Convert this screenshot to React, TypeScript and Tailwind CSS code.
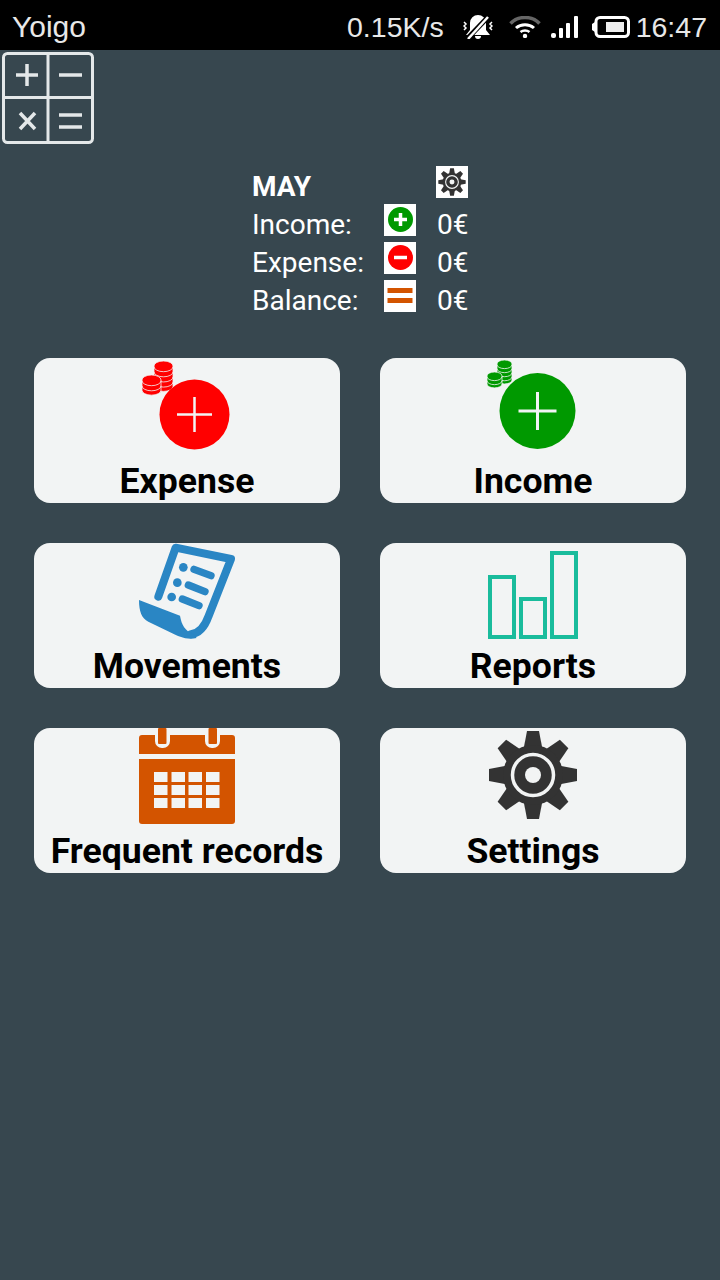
import React from 'react';

const Gear = ({ className }: { className: string }) => (
    <svg viewBox="0 0 90 90" className={className}>
        {[0, 45, 90, 135, 180, 225, 270, 315].map((a) => (
            <polygon key={a} points="39,1 51,1 55,22 35,22" fill="#333333" transform={`rotate(${a} 45 45)`} />
        ))}
        <circle cx="45" cy="45" r="30" fill="#333333" />
        <circle cx="45" cy="45" r="20.500" fill="none" stroke="#f2f4f4" strokeWidth="3.500" />
        <circle cx="45" cy="45" r="8" fill="#f2f4f4" />
    </svg>
);

const Coins = ({ x, y, w, n, color }: { x: number; y: number; w: number; n: number; color: string }) => {
    const ry = w * 0.26;
    const step = w * 0.27;
    const h = step * n;
    const bands = Array.from({ length: n }, (_, i) => i);
    return (
        <g>
            <path
                d={`M${x} ${y + ry}v${h}a${w / 2} ${ry} 0 0 0 ${w} 0v${-h}a${w / 2} ${ry} 0 0 0 ${-w} 0z`}
                fill={color}
                stroke="#f2f4f4"
                strokeWidth="0.8"
            />
            {bands.map((i) => (
                <path
                    key={i}
                    d={`M${x} ${y + ry + i * step + 0.8}a${w / 2} ${ry} 0 0 0 ${w} 0`}
                    fill="none"
                    stroke="#f2f4f4"
                    strokeWidth="0.8"
                />
            ))}
        </g>
    );
};

const ExpenseIcon = () => (
    <svg viewBox="140 360 92 90" className="ml-[106px] mt-[2px] h-[90px] w-[92px] shrink-0">
        <Coins x={154} y={361} w={19} n={4} color="#ff0000" />
        <Coins x={142} y={375} w={19} n={2} color="#ff0000" />
        <circle cx="194.500" cy="414.500" r="35" fill="#ff0000" />
        <path d="M194.500 397v35M177 414.500h35" stroke="#f2f4f4" strokeWidth="2.500" />
    </svg>
);

const IncomeIcon = () => (
    <svg viewBox="485 358 92 92" className="ml-[105px] h-[92px] w-[92px] shrink-0">
        <Coins x={497} y={360} w={15} n={4} color="#009900" />
        <Coins x={487} y={372} w={15} n={2} color="#009900" />
        <circle cx="537.500" cy="411" r="38" fill="#009900" />
        <path d="M537.500 392v38M518.500 411h38" stroke="#f2f4f4" strokeWidth="3" />
    </svg>
);

const MovementsIcon = () => (
    <svg viewBox="0 24 375 288" className="ml-[91px] h-[96px] w-[125px] shrink-0">
        <path
            d="M100 185L152 38L318 72L250 245C237 282 220 295 198 298"
            fill="none"
            stroke="#2a86c4"
            strokeWidth="24"
            strokeLinecap="round"
            strokeLinejoin="round"
        />
        <path
            d="M42 195L165 242C170 270 180 288 205 296L215 309C185 316 160 304 140 294L70 260C50 250 42 230 42 195Z"
            fill="#2a86c4"
        />
        <circle cx="175" cy="97" r="13" fill="#2a86c4" />
        <circle cx="157" cy="143" r="13" fill="#2a86c4" />
        <circle cx="140" cy="186" r="13" fill="#2a86c4" />
        <path
            d="M207 103L258 122M190 150L240 170M172 192L222 212"
            stroke="#2a86c4"
            strokeWidth="22"
            strokeLinecap="round"
        />
    </svg>
);

const ReportsIcon = () => (
    <svg viewBox="485 545 95 96" className="ml-[105px] mt-[2px] h-[96px] w-[95px] shrink-0">
        <g fill="none" stroke="#1abc9c" strokeWidth="4">
            <rect x="490" y="577" width="24" height="60" />
            <rect x="521" y="599" width="24" height="38" />
            <rect x="552" y="553" width="24" height="84" />
        </g>
    </svg>
);

const CalendarIcon = () => (
    <svg viewBox="139 728 96 96" className="ml-[105px] h-[96px] w-[96px] shrink-0">
        <path
            d="M142 735H155V741a7 7 0 0 0 7 7h1a7 7 0 0 0 7-7V735H205V741a7 7 0 0 0 7 7h1a7 7 0 0 0 7-7V735H232a3 3 0 0 1 3 3V754H139V738a3 3 0 0 1 3-3Z"
            fill="#d35400"
        />
        <rect x="158" y="728" width="8.500" height="16" rx="1" fill="#d35400" />
        <rect x="208.500" y="728" width="8.500" height="16" rx="1" fill="#d35400" />
        <path d="M139 759H235V821a3 3 0 0 1-3 3H142a3 3 0 0 1-3-3Z" fill="#d35400" />
        {[772, 785, 798].map((y) =>
            [154, 171.500, 188.500, 206].map((x) => (
                <rect key={`${x}-${y}`} x={x} y={y} width="13.500" height="10" fill="#f2f4f4" />
            ))
        )}
    </svg>
);

const SettingsIcon = () => <Gear className="ml-[108px] mt-[2px] h-[90px] w-[90px] shrink-0" />;

const cards: [string, React.ReactNode][] = [
    ['Expense', <ExpenseIcon />],
    ['Income', <IncomeIcon />],
    ['Movements', <MovementsIcon />],
    ['Reports', <ReportsIcon />],
    ['Frequent records', <CalendarIcon />],
    ['Settings', <SettingsIcon />],
];

const StatusBar = () => (
    <div className="flex h-[50px] items-center bg-black pl-3 pr-[13px] pt-[3px] font-['Liberation_Sans',sans-serif] text-[28.500px] text-[#e8e8e8]">
        <span className="text-[30px]">Yoigo</span>
        <span className="ml-auto pt-px">0.15K/s</span>
        <svg viewBox="0 0 30 24" className="ml-[19px] h-6 w-[30px]">
            <path d="M15 0a8 8 0 0 1 8 8v7l4 5H3l4-5V8a8 8 0 0 1 8-8ZM12 21h6a3 3 0 0 1-6 0Z" fill="#ffffff" />
            <path d="M1 7l2 2-2 2 2 2-2 2M29 7l-2 2 2 2-2 2 2 2" fill="none" stroke="#ffffff" strokeWidth="1.500" />
            <path d="M4 24L26 1" stroke="#000000" strokeWidth="5" />
            <path d="M5 24L25 2" stroke="#ffffff" strokeWidth="2.500" />
        </svg>
        <svg viewBox="0 0 32 22" className="ml-4 h-[22px] w-8">
            <path d="M1.500 7.500C9 -0.500 23 -0.500 30.500 7.500" fill="none" stroke="#666666" strokeWidth="3.500" />
            <path d="M7 12C12 7.500 20 7.500 25 12" fill="none" stroke="#ffffff" strokeWidth="3" />
            <path d="M11.500 16C14 14 18 14 20.500 16" fill="none" stroke="#ffffff" strokeWidth="2.500" />
            <circle cx="16" cy="20" r="2.200" fill="#ffffff" />
        </svg>
        <svg viewBox="0 0 28 22" className="ml-[10px] h-[22px] w-7">
            <rect x="0" y="17" width="5" height="5" rx="2" fill="#ffffff" />
            <rect x="8" y="12" width="4" height="10" rx="1" fill="#ffffff" />
            <rect x="15" y="7" width="4" height="15" rx="1" fill="#ffffff" />
            <rect x="23" y="0" width="4" height="22" rx="1" fill="#ffffff" />
        </svg>
        <svg viewBox="0 0 38 22" className="ml-[13px] h-[22px] w-[38px]">
            <path d="M0 8l3-2v10l-3-2Z" fill="#ffffff" />
            <rect x="4" y="1.500" width="32.500" height="19" rx="4" fill="none" stroke="#ffffff" strokeWidth="3" />
            <rect x="14" y="6" width="18" height="10" fill="#eeeeee" />
        </svg>
        <span className="ml-[6px] pt-px">16:47</span>
    </div>
);

const CalcIcon = () => (
    <svg viewBox="0 0 92 92" className="ml-[2px] mt-[2px] block h-[92px] w-[92px]">
        <g fill="none" stroke="#e4e8e9" strokeWidth="3">
            <rect x="1.500" y="1.500" width="89" height="89" rx="4" />
            <path d="M46 1.500V90.500M1.500 45.500H90.500" />
        </g>
        <g fill="none" stroke="#e4e8e9" strokeWidth="3.500">
            <path d="M25 12V34M14 23H36M57 23H80M57 63H80M57 75H80" />
            <path d="M18 61L33 77M33 61L18 77" />
        </g>
    </svg>
);

const StatIcon = ({ kind }: { kind: 'plus' | 'minus' | 'equal' }) => (
    <svg viewBox="0 0 32 32" className="h-8 w-8 bg-white">
        {kind === 'plus' && (
            <>
                <circle cx="16.500" cy="15.500" r="12.500" fill="#009900" />
                <path d="M16.500 9V22M10 15.500H23" stroke="#ffffff" strokeWidth="3.500" />
            </>
        )}
        {kind === 'minus' && (
            <>
                <circle cx="16.500" cy="15.500" r="12.500" fill="#ff0000" />
                <path d="M10 15.500H23" stroke="#ffffff" strokeWidth="3.500" />
            </>
        )}
        {kind === 'equal' && (
            <path d="M3.500 10.500H28.500M3.500 20.500H28.500" stroke="#d35400" strokeWidth="5" />
        )}
    </svg>
);

const Summary = () => {
    const rows: [string, 'plus' | 'minus' | 'equal'][] = [
        ['Income:', 'plus'],
        ['Expense:', 'minus'],
        ['Balance:', 'equal'],
    ];
    return (
        <div className="mx-auto mt-[22px] grid w-[216px] grid-cols-[132px_52px_32px] grid-rows-[repeat(4,38px)] text-[28px] leading-[42px] text-white">
            <span className="col-span-2 font-bold">MAY</span>
            <div className="h-8 w-8 bg-white">
                <Gear className="h-8 w-8 p-[2px]" />
            </div>
            {rows.map(([label, kind]) => (
                <React.Fragment key={label}>
                    <span>{label}</span>
                    <StatIcon kind={kind} />
                    <span className="ml-px whitespace-nowrap">0€</span>
                </React.Fragment>
            ))}
        </div>
    );
};

export default function App() {
    return (
        <div className="flex h-[1280px] flex-col overflow-hidden bg-[#37474f] font-['Roboto',sans-serif]">
            <StatusBar />
            <CalcIcon />
            <Summary />
            <div className="mt-10 grid grid-cols-2 gap-10 px-[34px]">
                {cards.map(([label, icon]) => (
                    <div key={label} className="flex h-[145px] flex-col overflow-hidden rounded-2xl bg-[#f2f4f4]">
                        {icon}
                        <span className="mt-auto w-full pb-[2px] text-center text-[35.600px] font-bold leading-[40px] text-black">
                            {label}
                        </span>
                    </div>
                ))}
            </div>
        </div>
    );
}
